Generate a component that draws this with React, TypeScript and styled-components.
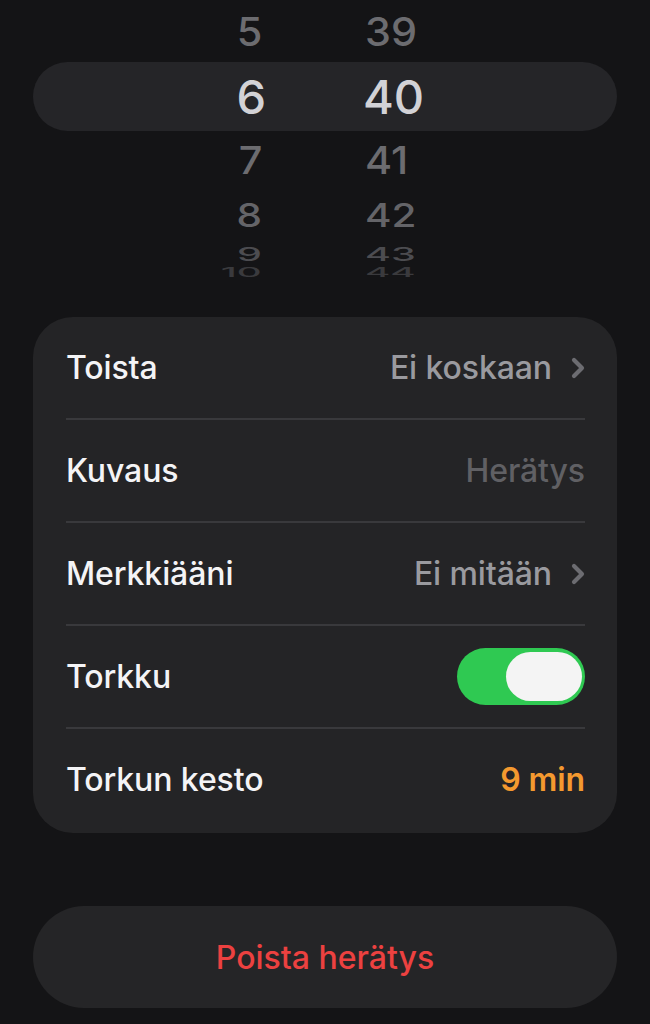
import styled, { createGlobalStyle } from 'styled-components'

const GlobalStyle = createGlobalStyle`
  html, body {
    margin: 0;
    padding: 0;
    background: #141416;
  }
  body {
    font-family: Inter, 'Noto Sans', 'Liberation Sans', sans-serif;
    -webkit-font-smoothing: antialiased;
  }
`

interface WheelRow {
  hour: string
  minute: string
  height: number
  scaleY: number
  scaleX: number
  color: string
}

const rowsAbove: WheelRow[] = [
  { hour: '5', minute: '39', height: 62, scaleY: 0.86, scaleX: 0.9, color: '#6c6c70' },
]

const rowsBelow: WheelRow[] = [
  { hour: '7', minute: '41', height: 58, scaleY: 0.83, scaleX: 0.9, color: '#6c6c70' },
  { hour: '8', minute: '42', height: 51, scaleY: 0.7, scaleX: 0.88, color: '#646468' },
  { hour: '9', minute: '43', height: 27, scaleY: 0.42, scaleX: 0.86, color: '#4c4c50' },
  { hour: '10', minute: '44', height: 10, scaleY: 0.3, scaleX: 0.84, color: '#3a3a3d' },
]

function Chevron() {
  return (
    <svg width="14" height="22" viewBox="0 0 14 22" fill="none">
      <polyline
        points="3,3 11,11 3,19"
        stroke="#6c6c71"
        strokeWidth="4.2"
        strokeLinecap="round"
        strokeLinejoin="round"
      />
    </svg>
  )
}

function Wheel({ row }: { row: WheelRow }) {
  const squash = `scale(${row.scaleX}, ${row.scaleY})`
  return (
    <WheelLine style={{ height: row.height, color: row.color }}>
      <HourCell>
        <HourText style={{ transform: squash }}>{row.hour}</HourText>
      </HourCell>
      <MinuteCell>
        <MinuteText style={{ transform: squash }}>{row.minute}</MinuteText>
      </MinuteCell>
    </WheelLine>
  )
}

export default function App() {
  return (
    <>
      <GlobalStyle />
      <Screen>
        <Picker>
          {rowsAbove.map((row) => (
            <Wheel key={row.hour} row={row} />
          ))}
          <SelectedPill>
            <SelectedHour>6</SelectedHour>
            <SelectedMinute>40</SelectedMinute>
          </SelectedPill>
          {rowsBelow.map((row) => (
            <Wheel key={row.hour} row={row} />
          ))}
        </Picker>

        <SettingsCard>
          <SettingRow>
            <Label>Toista</Label>
            <ValueGroup>
              <Value>Ei koskaan</Value>
              <Chevron />
            </ValueGroup>
          </SettingRow>
          <Divider />
          <SettingRow>
            <Label>Kuvaus</Label>
            <Value tone="placeholder">Herätys</Value>
          </SettingRow>
          <Divider />
          <SettingRow>
            <Label>Merkkiääni</Label>
            <ValueGroup>
              <Value>Ei mitään</Value>
              <Chevron />
            </ValueGroup>
          </SettingRow>
          <Divider />
          <SettingRow>
            <Label>Torkku</Label>
            <Toggle>
              <Knob />
            </Toggle>
          </SettingRow>
          <Divider />
          <SettingRow>
            <Label>Torkun kesto</Label>
            <Value tone="accent">9 min</Value>
          </SettingRow>
        </SettingsCard>

        <DeleteButton>Poista herätys</DeleteButton>
      </Screen>
    </>
  )
}

const Screen = styled.div`
  width: 650px;
  height: 1024px;
  overflow: hidden;
  display: flex;
  flex-direction: column;
  background: #141416;
`
const Picker = styled.div`
  height: 290px;
  display: flex;
  flex-direction: column;
  overflow: hidden;
`
const WheelLine = styled.div`
  flex-shrink: 0;
  display: flex;
  align-items: center;
  overflow: hidden;
  font-size: 46px;
  font-weight: 500;
  line-height: 46px;
`
const HourCell = styled.div`
  width: 262px;
  display: flex;
  justify-content: flex-end;
`
const HourText = styled.span`
  display: block;
  transform-origin: right center;
`
const MinuteCell = styled.div`
  padding-left: 103px;
  display: flex;
`
const MinuteText = styled.span`
  display: block;
  transform-origin: left center;
`
const SelectedPill = styled.div`
  flex-shrink: 0;
  height: 69px;
  margin: 0 33px;
  border-radius: 35px;
  background: #252528;
  display: flex;
  align-items: center;
  font-size: 47px;
  font-weight: 500;
  line-height: 1;
  color: #d2d2d6;
`
const SelectedHour = styled.div`
  width: 233px;
  text-align: right;
`
const SelectedMinute = styled.div`
  padding-left: 97px;
`
const SettingsCard = styled.div`
  margin: 27px 33px 0;
  padding: 0 32px 3px 33px;
  border-radius: 40px;
  background: #242426;
  display: flex;
  flex-direction: column;
`
const SettingRow = styled.div`
  height: 101px;
  display: flex;
  align-items: center;
  justify-content: space-between;
`
const Divider = styled.div`
  height: 2px;
  background: #39393c;
`
const Label = styled.span`
  font-size: 32px;
  font-weight: 500;
  color: #f4f4f6;
  letter-spacing: -0.1px;
`
const ValueGroup = styled.div`
  display: flex;
  align-items: center;
  gap: 19px;
`
const Value = styled.span<{ tone?: 'placeholder' | 'accent' }>`
  font-size: 32px;
  font-weight: ${(props) => (props.tone === 'accent' ? 600 : 500)};
  letter-spacing: -0.1px;
  color: ${(props) =>
    props.tone === 'placeholder'
      ? '#606064'
      : props.tone === 'accent'
        ? '#f4992f'
        : '#9a9a9f'};
`
const Toggle = styled.div`
  width: 128px;
  height: 57px;
  border-radius: 29px;
  background: #2fc952;
  display: flex;
  align-items: center;
  justify-content: flex-end;
  padding: 0 3px;
  box-sizing: border-box;
`
const Knob = styled.div`
  width: 76px;
  height: 49px;
  border-radius: 25px;
  background: #f4f4f4;
`
const DeleteButton = styled.button`
  margin: 73px 33px 0;
  height: 102px;
  border: none;
  border-radius: 51px;
  background: #252527;
  font-family: Inter, 'Noto Sans', 'Liberation Sans', sans-serif;
  font-size: 32px;
  font-weight: 500;
  color: #ec4140;
  cursor: pointer;
`
